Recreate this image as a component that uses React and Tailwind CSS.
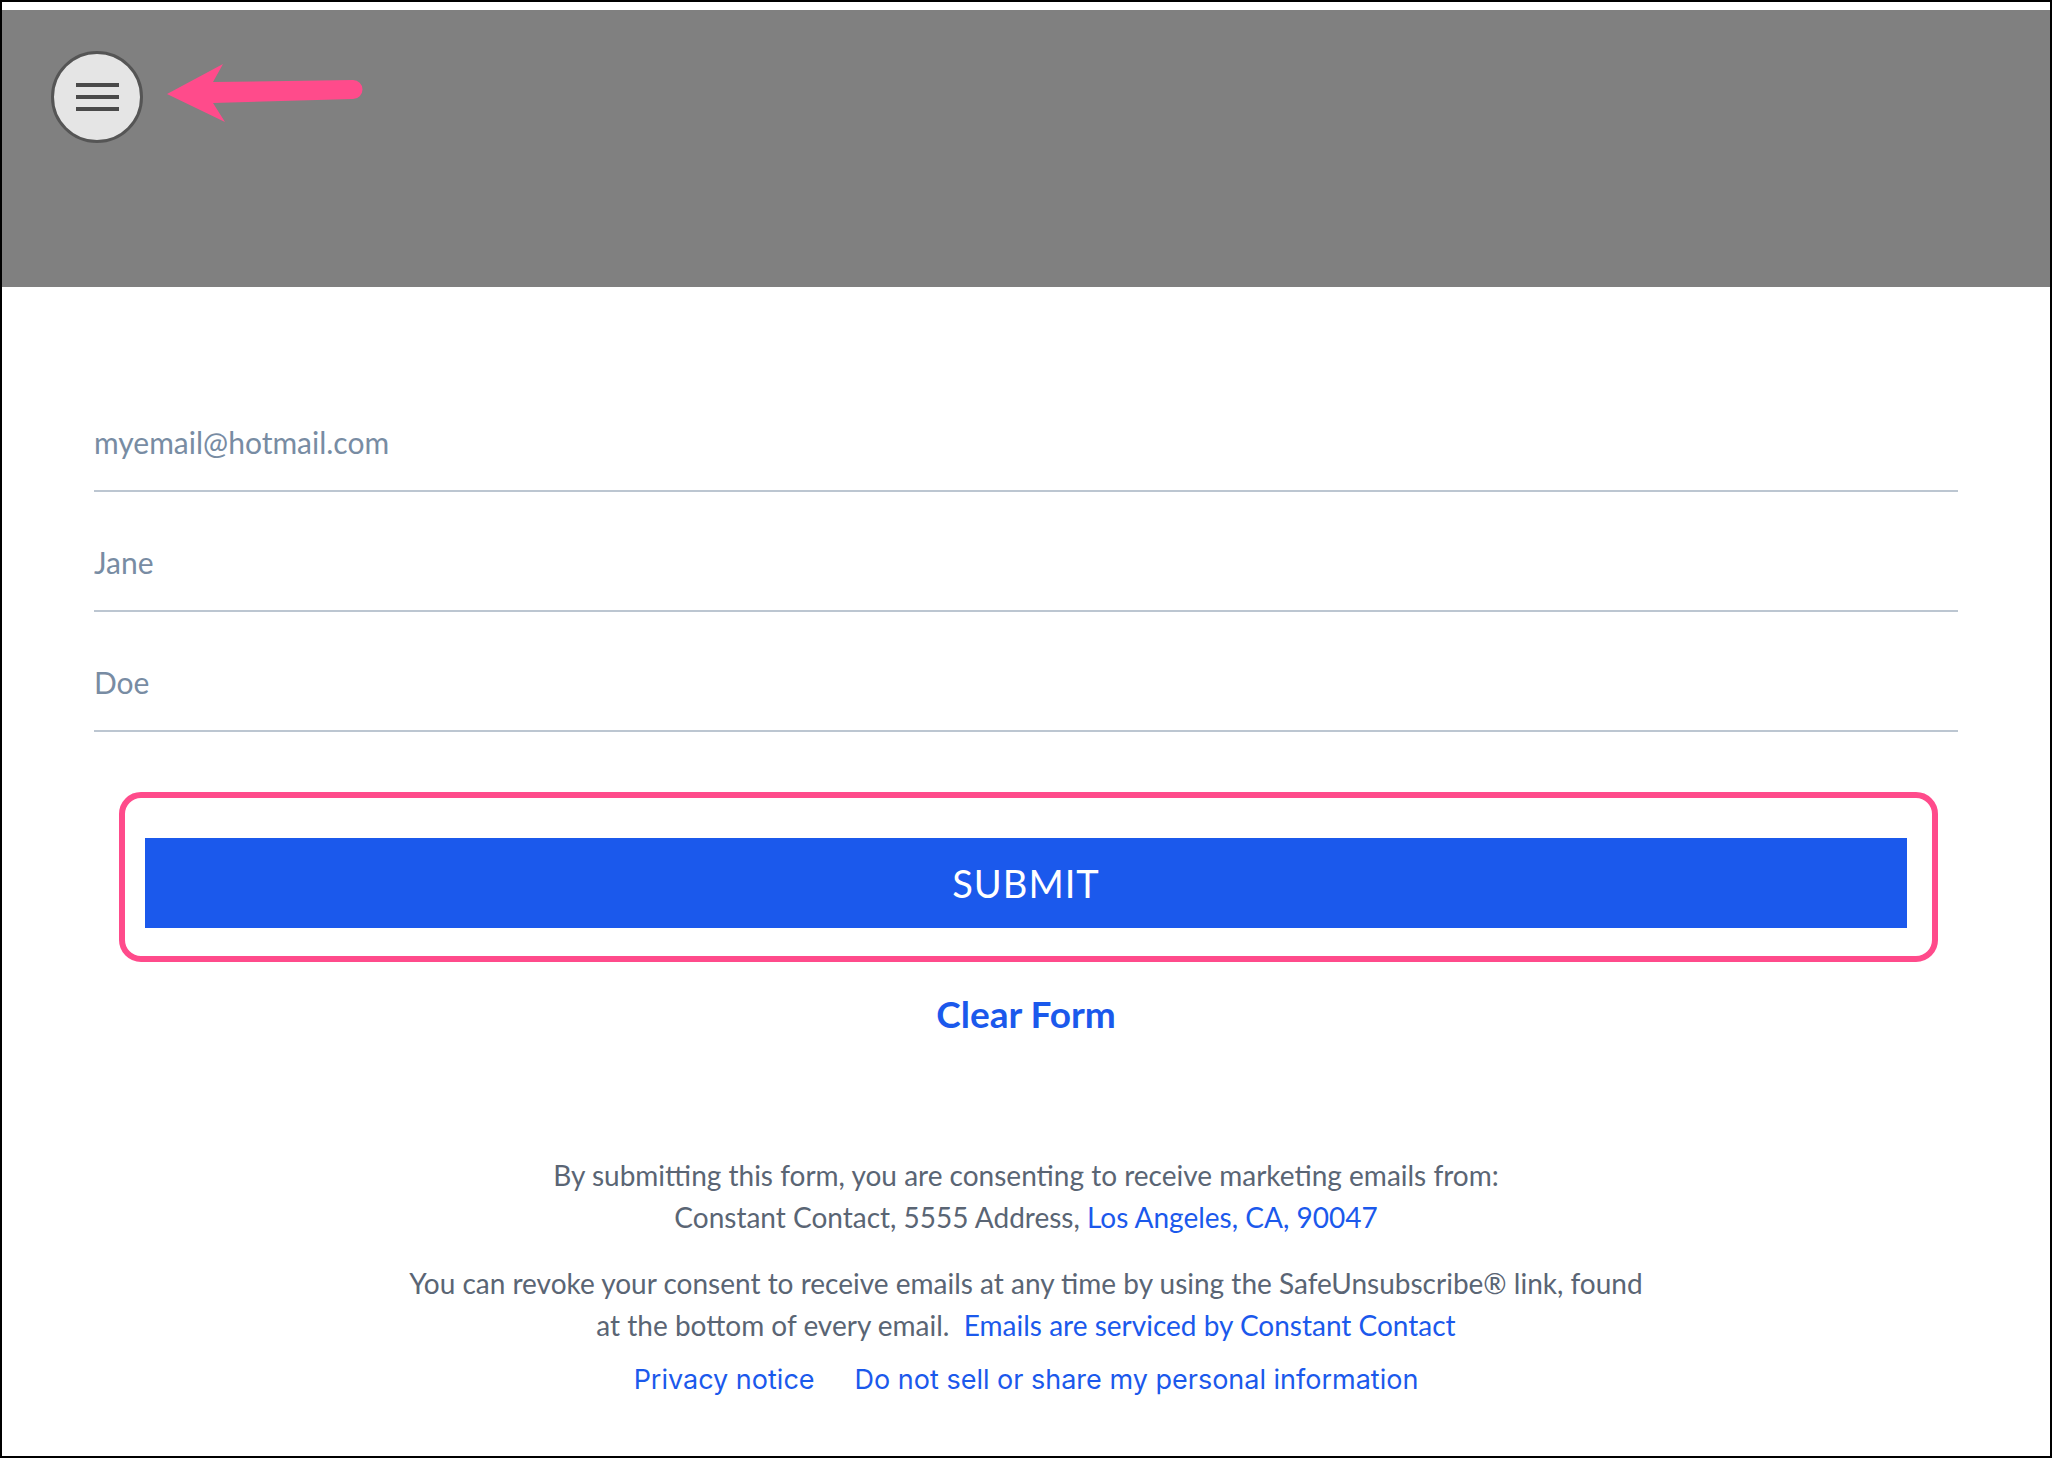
import React, { useState } from "react";

// signup form screenshot, with the pink annotation arrow and box
const fields = [
  { id: "email", type: "email", placeholder: "myemail@hotmail.com" },
  { id: "first", type: "text", placeholder: "Jane" },
  { id: "last", type: "text", placeholder: "Doe" },
];

function App() {
  const [values, setValues] = useState({ email: "", first: "", last: "" });

  const clearForm = () => setValues({ email: "", first: "", last: "" });

  return (
    <div className="w-[2052px] h-[1458px] border-2 border-black bg-white flex flex-col font-[Lato,sans-serif] overflow-hidden">
      {/* header bar */}
      <div className="relative mt-[8px] h-[277px] bg-[#808080] shrink-0">
        <button className="ml-[49px] mt-[41px] w-[92px] h-[92px] rounded-full border-[3px] border-[#555555] bg-[#e5e5e5] flex items-center justify-center">
          <svg width="43" height="28" viewBox="0 0 43 28">
            <rect x="0" y="0" width="43" height="4" fill="#4a4a4a" />
            <rect x="0" y="12" width="43" height="4" fill="#4a4a4a" />
            <rect x="0" y="24" width="43" height="4" fill="#4a4a4a" />
          </svg>
        </button>
        {/* annotation arrow */}
        <svg className="absolute left-[150px] top-[40px]" width="230" height="110" viewBox="0 0 230 110">
          <path
            d="M15 44 L71 14 L61 32 L201 30 A9.5 9.5 0 0 1 201 49 L61 53 L73 72 Z"
            fill="#ff4b8b"
          />
        </svg>
      </div>

      {/* fields */}
      <div className="mx-[92px] mt-[85px] flex flex-col">
        {fields.map((f) => (
          <input
            key={f.id}
            type={f.type}
            value={values[f.id]}
            onChange={(e) => setValues({ ...values, [f.id]: e.target.value })}
            placeholder={f.placeholder}
            className="block w-full h-[120px] pt-[40px] pb-[18px] border-b-2 border-[#bcc6d1] text-[30px] text-[#4a5a6c] placeholder:text-[#788ca3] outline-none bg-transparent"
          />
        ))}
      </div>

      {/* submit, highlighted */}
      <div className="ml-[117px] mr-[112px] mt-[60px] border-[6px] border-[#ff4b8b] rounded-[22px] pt-[40px] pb-[28px] pl-[20px] pr-[25px]">
        <button className="w-full h-[90px] bg-[#1b59ec] text-white text-[38px] tracking-[1px]">
          SUBMIT
        </button>
      </div>

      <div className="mt-[30px] flex justify-center">
        <button onClick={clearForm} className="text-[37px] leading-[44px] font-bold text-[#1b59ec]">
          Clear Form
        </button>
      </div>

      {/* footer */}
      <div className="mt-[118px] text-center text-[28px] leading-[42px] text-[#5a6574]">
        <p>
          By submitting this form, you are consenting to receive marketing emails from:
          <br />
          Constant Contact, 5555 Address, <a className="text-[#1b59ec]">Los Angeles, CA, 90047</a>
        </p>
        <p className="mt-[24px]">
          You can revoke your consent to receive emails at any time by using the SafeUnsubscribe® link, found
          <br />
          at the bottom of every email.&nbsp; <a className="text-[#1b59ec]">Emails are serviced by Constant Contact</a>
        </p>
        <div className="mt-[13px] flex justify-center gap-[40px] font-[Inter,sans-serif] text-[27px] text-[#1b59ec]">
          <a>Privacy notice</a>
          <a>Do not sell or share my personal information</a>
        </div>
      </div>
    </div>
  );
}

export default App;
